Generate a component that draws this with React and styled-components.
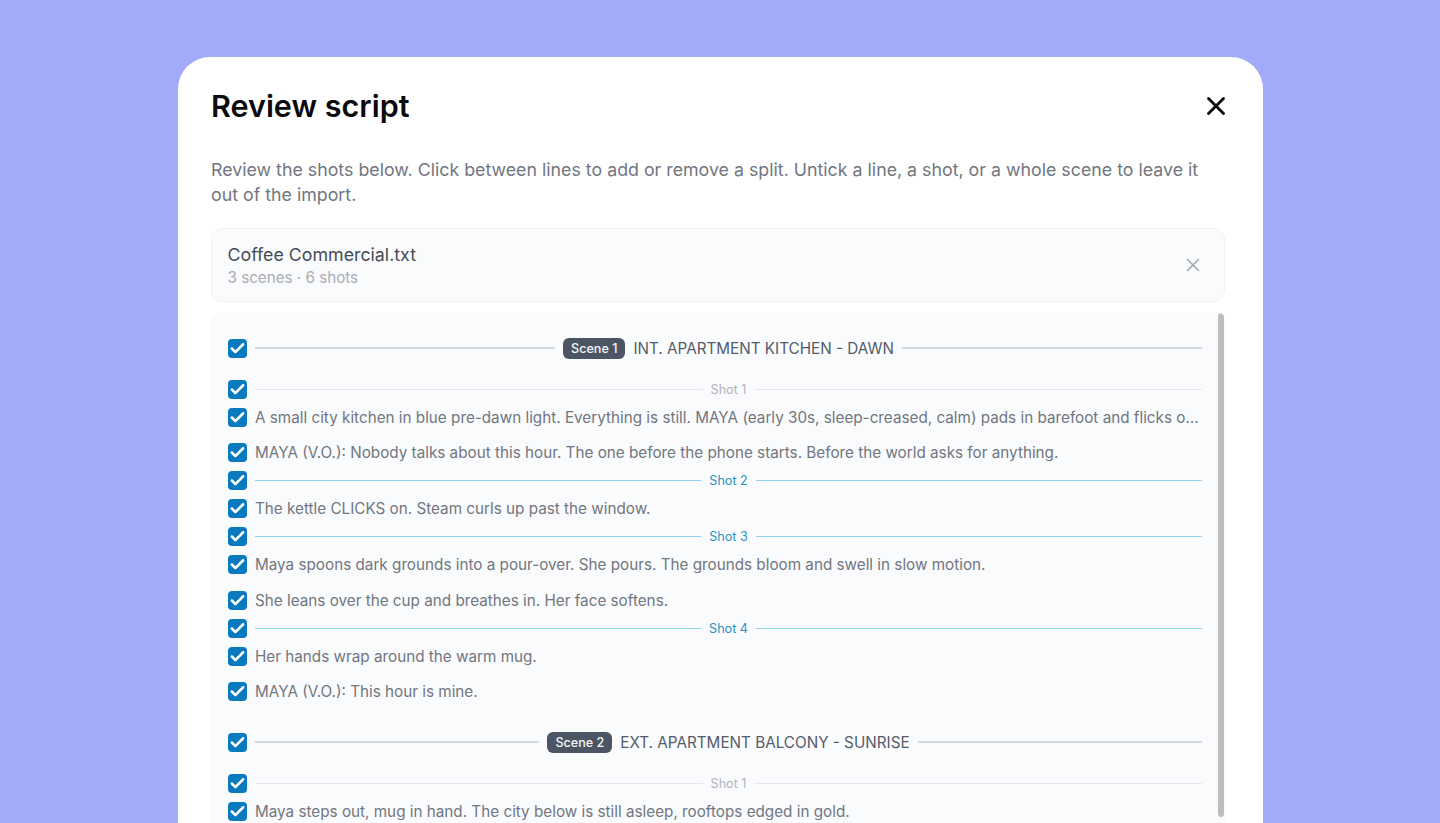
import styled, { createGlobalStyle } from 'styled-components';
import { X, Check } from 'lucide-react';

const scenes = [
  {
    label: 'Scene 1',
    title: 'INT. APARTMENT KITCHEN - DAWN',
    shots: [
      {
        name: 'Shot 1',
        lines: [
          'A small city kitchen in blue pre-dawn light. Everything is still. MAYA (early 30s, sleep-creased, calm) pads in barefoot and flicks on the kettle. She stands at the window.',
          'MAYA (V.O.): Nobody talks about this hour. The one before the phone starts. Before the world asks for anything.',
        ],
      },
      { name: 'Shot 2', split: true, lines: ['The kettle CLICKS on. Steam curls up past the window.'] },
      {
        name: 'Shot 3',
        split: true,
        lines: [
          'Maya spoons dark grounds into a pour-over. She pours. The grounds bloom and swell in slow motion.',
          'She leans over the cup and breathes in. Her face softens.',
        ],
      },
      {
        name: 'Shot 4',
        split: true,
        lines: ['Her hands wrap around the warm mug.', 'MAYA (V.O.): This hour is mine.'],
      },
    ],
  },
  {
    label: 'Scene 2',
    title: 'EXT. APARTMENT BALCONY - SUNRISE',
    shots: [
      {
        name: 'Shot 1',
        lines: ['Maya steps out, mug in hand. The city below is still asleep, rooftops edged in gold.'],
      },
    ],
  },
];

function Tick () {
  return (
    <CheckBox>
      <Check size={17} strokeWidth={3.6} color="#fff" />
    </CheckBox>
  );
}

function App () {
  return (
    <>
      <GlobalStyle />
      <Page>
        <Modal>
          <Header>
            <Title>Review script</Title>
            <CloseButton aria-label="Close">
              <X size={30} strokeWidth={2.3} />
            </CloseButton>
          </Header>
          <Description>
            Review the shots below. Click between lines to add or remove a split. Untick a line, a shot, or a whole scene to leave it out of the import.
          </Description>
          <FileCard>
            <div>
              <FileName>Coffee Commercial.txt</FileName>
              <FileMeta>3 scenes · 6 shots</FileMeta>
            </div>
            <RemoveButton aria-label="Remove file">
              <X size={22} strokeWidth={1.7} />
            </RemoveButton>
          </FileCard>
          <ScriptPanel>
            <ScrollThumb />
            {scenes.map((scene) => (
              <Scene key={scene.label}>
                <SceneRow>
                  <Tick />
                  <SceneLine />
                  <SceneBadge>{scene.label}</SceneBadge>
                  <SceneTitle>{scene.title}</SceneTitle>
                  <SceneLine />
                </SceneRow>
                {scene.shots.map((shot) => (
                  <div key={shot.name}>
                    <ShotRow>
                      <Tick />
                      <ShotLine $split={shot.split} />
                      <ShotName $split={shot.split}>{shot.name}</ShotName>
                      <ShotLine $split={shot.split} />
                    </ShotRow>
                    {shot.lines.map((line) => (
                      <LineRow key={line}>
                        <Tick />
                        <LineText>{line}</LineText>
                      </LineRow>
                    ))}
                  </div>
                ))}
              </Scene>
            ))}
          </ScriptPanel>
        </Modal>
      </Page>
    </>
  );
};

const GlobalStyle = createGlobalStyle`
  html, body {
    margin: 0;
    height: 100%;
    overflow: hidden;
  }

  body {
    font-family: Inter, "Liberation Sans", sans-serif;
    background-color: #a2aafa;
  }
`

const Page = styled.div`
  display: flex;
  justify-content: center;
  height: 823px;
  padding-top: 57px;
  padding-left: 1px;
  box-sizing: border-box;
  overflow: hidden;
`

const Modal = styled.div`
  width: 1085px;
  height: 900px;
  padding: 32px 38px 0 33px;
  box-sizing: border-box;
  flex-shrink: 0;
  background-color: #fff;
  border-radius: 32px;
`

const Header = styled.div`
  display: flex;
  align-items: center;
  justify-content: space-between;
  height: 33px;
  margin-bottom: 35px;
`

const Title = styled.h2`
  margin: 0;
  font-size: 30.5px;
  line-height: 33px;
  font-weight: 600;
  color: #0b0b0f;
`

const CloseButton = styled.button`
  display: flex;
  padding: 0;
  margin-right: -6px;
  border: none;
  background: none;
  color: #0b0b0f;
`

const Description = styled.p`
  margin: 0 0 21px;
  font-size: 17.8px;
  line-height: 25px;
  color: #71767f;
`

const FileCard = styled.div`
  display: flex;
  align-items: center;
  justify-content: space-between;
  height: 74px;
  padding: 0 20px 0 15.5px;
  box-sizing: border-box;
  background-color: #fafbfc;
  border: 1px solid #f0f1f3;
  border-radius: 11px;
`

const FileName = styled.div`
  font-size: 17.8px;
  line-height: 24px;
  color: #454b56;
`

const FileMeta = styled.div`
  font-size: 15.2px;
  line-height: 21px;
  color: #a9adb5;
`

const RemoveButton = styled.button`
  display: flex;
  padding: 0;
  border: none;
  background: none;
  color: #a3a6ab;
`

const ScriptPanel = styled.div`
  position: relative;
  height: 600px;
  margin-top: 11px;
  padding: 20px 23px 0 17px;
  box-sizing: border-box;
  overflow: hidden;
  background-color: #fafbfd;
  border-radius: 6px 6px 0 0;
`

const ScrollThumb = styled.div`
  position: absolute;
  top: 0;
  right: 1px;
  width: 6px;
  height: 504px;
  background-color: #bdbdbd;
  border-radius: 3px;
`

const Scene = styled.div`
  margin-bottom: 18px;
`

const CheckBox = styled.span`
  display: flex;
  align-items: center;
  justify-content: center;
  width: 19px;
  height: 19px;
  flex-shrink: 0;
  background-color: #0a7abf;
  border-radius: 4px;
`

const SceneRow = styled.div`
  display: flex;
  align-items: center;
  gap: 8px;
  height: 30px;
  margin-bottom: 15.75px;
`

const SceneLine = styled.div`
  flex: 1;
  height: 2px;
  background-color: #d5d8dd;
`

const SceneBadge = styled.span`
  padding: 0 8px;
  font-size: 12.6px;
  line-height: 21px;
  font-weight: 500;
  color: #f4f5f7;
  background-color: #4b5563;
  border-radius: 6px;
`

const SceneTitle = styled.span`
  font-size: 15.25px;
  color: #555c69;
`

const ShotRow = styled.div`
  display: flex;
  align-items: center;
  gap: 8px;
  height: 20.5px;
`

const ShotLine = styled.div`
  flex: 1;
  height: 1px;
  background-color: ${(props) => (props.$split ? '#8ed3f2' : '#e5e7eb')};
`

const ShotName = styled.span`
  font-size: 12.6px;
  color: ${(props) => (props.$split ? '#2b93c2' : '#b0b4ba')};
`

const LineRow = styled.div`
  display: flex;
  align-items: center;
  gap: 8px;
  height: 35.5px;
`

const LineText = styled.span`
  flex: 1;
  min-width: 0;
  overflow: hidden;
  white-space: nowrap;
  text-overflow: ellipsis;
  font-size: 15.25px;
  color: #71767f;
`

export default App;
